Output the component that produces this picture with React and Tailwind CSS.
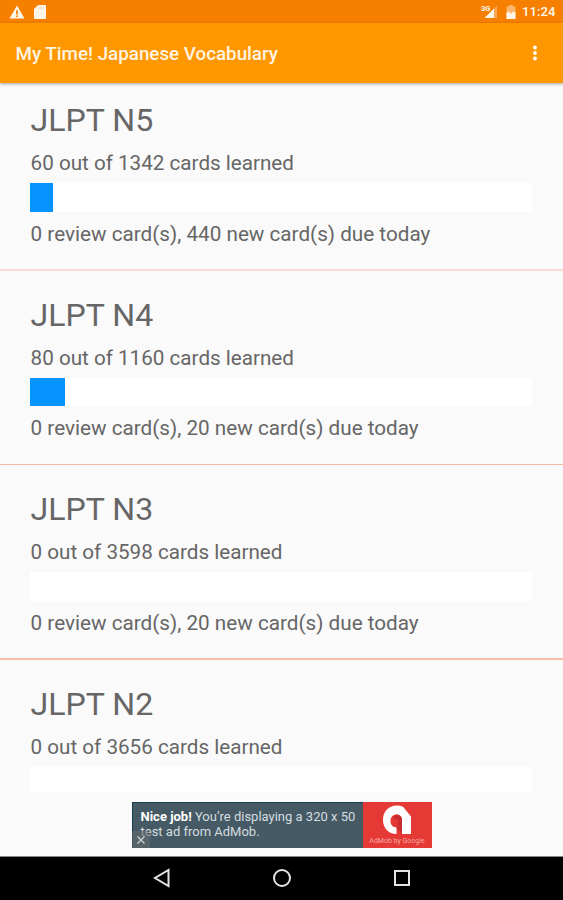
const decks = [
  { name: "JLPT N5", learned: 60, total: 1342, due: 440, fill: "w-[23px]", line: "bg-[#f8dccf]" },
  { name: "JLPT N4", learned: 80, total: 1160, due: 20, fill: "w-[35px]", line: "bg-[#f4b9a0]" },
  { name: "JLPT N3", learned: 0, total: 3598, due: 20, fill: "w-0", line: "bg-[#f6bfa9]" },
  { name: "JLPT N2", learned: 0, total: 3656, fill: "w-0" },
];

function StatusBar() {
  return (
    <div className="flex h-[23px] shrink-0 items-center bg-[#f77f00] text-[#fff6ea]">
      <svg className="ml-[9px] h-[14px] w-4" viewBox="0 0 16 14">
        <path fill="currentColor" fillRule="evenodd" d="M8 .5 15.5 13.5H.5ZM7.1 5.2v4.2h1.8v-4.2ZM7.1 10.4v1.700h1.8v-1.700Z" />
      </svg>
      <svg className="ml-[9px] h-[14px] w-3" viewBox="0 0 12 14">
        <path fill="currentColor" d="M4 0h7q1 0 1 1v12q0 1-1 1H1q-1 0-1-1V4Z" />
        <path stroke="#fbc58c" strokeWidth=".8" d="M4.600 1.5v2.4M6.800 1.5v2.4M9 1.5v2.4" />
      </svg>
      <svg className="ml-auto h-[15px] w-[18px]" viewBox="0 0 18 15">
        <path fill="currentColor" fillOpacity=".35" d="M17 1.5V14H4.5Z" />
        <path fill="currentColor" d="M14 4.500V14H4.500Z" />
        <text x="1" y="6.5" fontSize="7.5" fontWeight="700" fontFamily="Roboto, sans-serif" fill="currentColor">3G</text>
      </svg>
      <svg className="ml-[8px] h-[14px] w-[10px]" viewBox="0 0 10 14">
        <path fill="currentColor" fillOpacity=".45" d="M3 0h4v1.5h2.5V14H.5V1.5H3Z" />
        <path fill="currentColor" d="M.5 7.500 3 6.500 5 9l2-2.500 2.500 1V14h-9Z" />
      </svg>
      <span className="ml-[6px] mr-[7px] w-[34px] whitespace-nowrap pt-px text-[13.2px] font-medium leading-none">11:24</span>
    </div>
  );
}

function Deck({ deck, first }) {
  return (
    <li className="shrink-0">
      <div className={`pl-[30px] pr-[31px] ${first ? "h-[186px] pt-[18px]" : "h-[193px] pt-[25px]"}`}>
        <h2 className="h-[41px] whitespace-nowrap pl-[0.6px] text-[32.1px] leading-[39px]">{deck.name}</h2>
        <p className="h-[41px] whitespace-nowrap pl-[0.6px] text-[20.65px] leading-[42px]">
          {deck.learned} out of {deck.total} cards learned
        </p>
        <div className="h-[28.5px] bg-white">
          <div className={`h-full bg-[#0693ff] ${deck.fill}`} />
        </div>
        {deck.due && (
          <p className="whitespace-nowrap pl-[0.6px] text-[20.7px] leading-[45px]">
            0 review card(s), {deck.due} new card(s) due today
          </p>
        )}
      </div>
      {deck.line && <div className={`h-[1.5px] ${deck.line}`} />}
    </li>
  );
}

function AdBanner() {
  return (
    <div className="relative mx-auto mt-[10px] flex h-[46px] w-[300px] bg-[#455a64]">
      <div className="flex-1 border-l border-t border-[#173b50] pl-[8px] pt-[6px] text-[13px] leading-[15px] text-[#d5dde0]">
        <p className="whitespace-nowrap">
          <b className="text-white">Nice job!</b> You’re displaying a 320 x 50
        </p>
        <p className="whitespace-nowrap">test ad from AdMob.</p>
      </div>
      <div className="flex w-[69px] flex-col items-center bg-[#e53935]">
        <svg className="mt-[3px] h-[30px] w-[30px]" viewBox="0 0 30 30">
          <path fill="#fff" d="M15 .5C6 .5 1 7 1 15c0 8 5.500 14 13.500 14v-6.500c-4 0-6-3-6-6.500 0-4 2.500-6.500 6-6.500 4 0 5.500 2.500 5.500 6V29h9V11.500L21 1.800Q18 .5 15 .5Z" />
          <path fill="#c82e2e" d="M11 12 14.500 9.500Q19 10 20 14V29l-5-5.500 1.500-7.500Z" />
        </svg>
        <span className="mt-[2px] whitespace-nowrap text-[7px] leading-[9px] text-[#f7a8a4]">AdMob by Google</span>
      </div>
      <div className="absolute bottom-0 left-0 flex h-[17px] w-[18px] items-center justify-center bg-[#666b6e]/60">
        <svg className="h-2 w-2" viewBox="0 0 8 8">
          <path stroke="#d0d4d6" strokeWidth="1.2" d="m.5.5 7 7m0-7-7 7" />
        </svg>
      </div>
    </div>
  );
}

function NavBar() {
  return (
    <div className="flex h-[44px] shrink-0 items-center justify-center gap-[100px] border-t border-[#888] bg-black pb-[2px]">
      <svg className="h-5 w-5" viewBox="0 0 20 20" fill="none" stroke="#e4e4e4" strokeWidth="2">
        <path d="M16.500 2v16L3 10Z" />
      </svg>
      <svg className="h-5 w-5" viewBox="0 0 20 20" fill="none" stroke="#e4e4e4" strokeWidth="2">
        <circle cx="10" cy="10" r="8" />
      </svg>
      <svg className="h-5 w-5" viewBox="0 0 20 20" fill="none" stroke="#e4e4e4" strokeWidth="2">
        <path d="M3 3h14v14H3Z" />
      </svg>
    </div>
  );
}

export default function App() {
  return (
    <div className="flex h-[900px] w-[563px] flex-col overflow-hidden bg-[#fafafa] font-[Roboto,sans-serif] text-[#666]">
      <StatusBar />
      <header className="z-10 flex h-[60px] shrink-0 items-center justify-between bg-[#ff9800] pl-[15.5px] pr-[26px] pt-[2px] text-white shadow-[0_1px_3px_rgba(0,0,0,0.35)]">
        <h1 className="whitespace-nowrap text-[18.8px] font-medium text-[#fff4e2]">My Time! Japanese Vocabulary</h1>
        <svg className="h-4 w-1 overflow-visible" viewBox="0 0 4 16" fill="#fff">
          <circle cx="2" cy="1.500" r="1.900" />
          <circle cx="2" cy="7" r="1.900" />
          <circle cx="2" cy="12.500" r="1.900" />
        </svg>
      </header>
      <ul className="flex h-[709px] shrink-0 flex-col overflow-hidden">
        {decks.map((deck, i) => (
          <Deck key={deck.name} deck={deck} first={i === 0} />
        ))}
      </ul>
      <div className="h-[64px] shrink-0">
        <AdBanner />
      </div>
      <NavBar />
    </div>
  );
}
